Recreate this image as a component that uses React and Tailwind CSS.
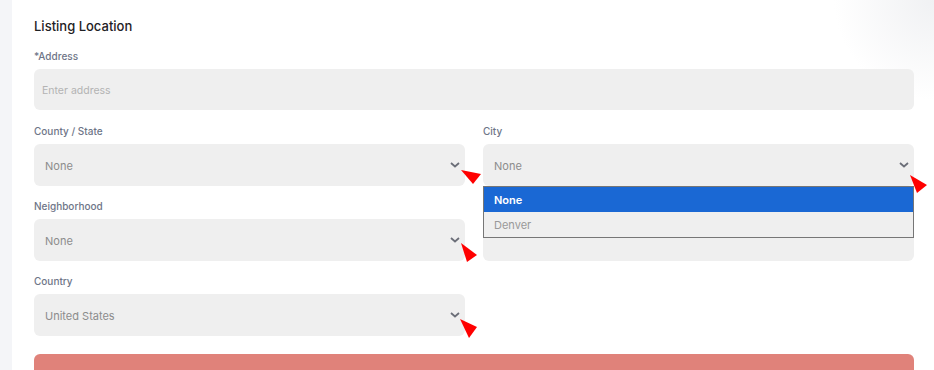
import React from 'react';

const Chevron = () => (
  <svg width="10" height="6" viewBox="0 0 10 6" className="shrink-0">
    <path d="M1 1l4 3.5L9 1" fill="none" stroke="#6b6e78" strokeWidth="1.8" />
  </svg>
);

const Label = ({ children }) => (
  <div className="h-[14px] mb-[7px] pt-[1px] text-[10px] leading-[14px] font-medium text-[#6e7587]">{children}</div>
);

const SelectBox = ({ value }) => (
  <div className="h-[42px] rounded-md bg-[#efefef] flex items-center justify-between pl-[11px] pr-[5px]">
    <span className="pt-[2px] text-[11px] text-[#8c8c8c]">{value}</span>
    <Chevron />
  </div>
);

const Field = ({ label, value }) => (
  <div>
    <Label>{label}</Label>
    <SelectBox value={value} />
  </div>
);

// red pointer marks drawn over the form
const marks = [
  '461,170 481,174 473,184',
  '910,175 927,185 917,193',
  '461,243 477,255 467,262',
  '460,319 477,327 469,338',
];

export default function App() {
  return (
    <div className="relative w-[934px] h-[370px] overflow-hidden flex bg-white" style={{ fontFamily: 'Inter, "Noto Sans", sans-serif' }}>
      <div className="w-[12px] shrink-0 bg-[#f4f5f8]" />
      <div className="flex-1 pl-[22px] pr-[20px] pt-[17px] bg-[radial-gradient(circle_at_100%_0%,#f0f1f3_0,#ffffff_100px)]">
        <h3 className="text-[13px] leading-[18px] font-medium text-[#1f2125]">Listing Location</h3>

        <div className="mt-[13px]">
          <Label>*Address</Label>
          <div className="h-[41px] rounded-md bg-[#efefef] flex items-center pl-[8px]">
            <span className="pt-[2px] text-[10.5px] text-[#b3b3b3]">Enter address</span>
          </div>
        </div>

        <div className="mt-[13px] grid grid-cols-2 gap-x-[18px] gap-y-[12px]">
          <Field label="County / State" value="None" />
          <div className="relative">
            <Field label="City" value="None" />
            <div className="absolute left-0 right-0 top-[63px] z-10 border border-[#767676] bg-[#efefef]">
              <div className="h-[25px] bg-[#1a68d4] flex items-center pl-[10px] pt-[1px] text-[11px] font-semibold text-white">None</div>
              <div className="h-[25px] flex items-center pl-[10px] pt-[1px] text-[11px] text-[#999999]">Denver</div>
            </div>
          </div>
          <Field label="Neighborhood" value="None" />
          <div>
            <div className="h-[14px] mb-[7px]" />
            <div className="h-[42px] rounded-md bg-[#efefef]" />
          </div>
          <Field label="Country" value="United States" />
          <div />
        </div>

        <div className="mt-[18px] h-[30px] rounded-t-md bg-[#e0827a]" />
      </div>

      <svg className="absolute inset-0 pointer-events-none z-20" width="934" height="370">
        {marks.map((p) => (
          <polygon key={p} points={p} fill="#ff0000" />
        ))}
      </svg>
    </div>
  );
}
